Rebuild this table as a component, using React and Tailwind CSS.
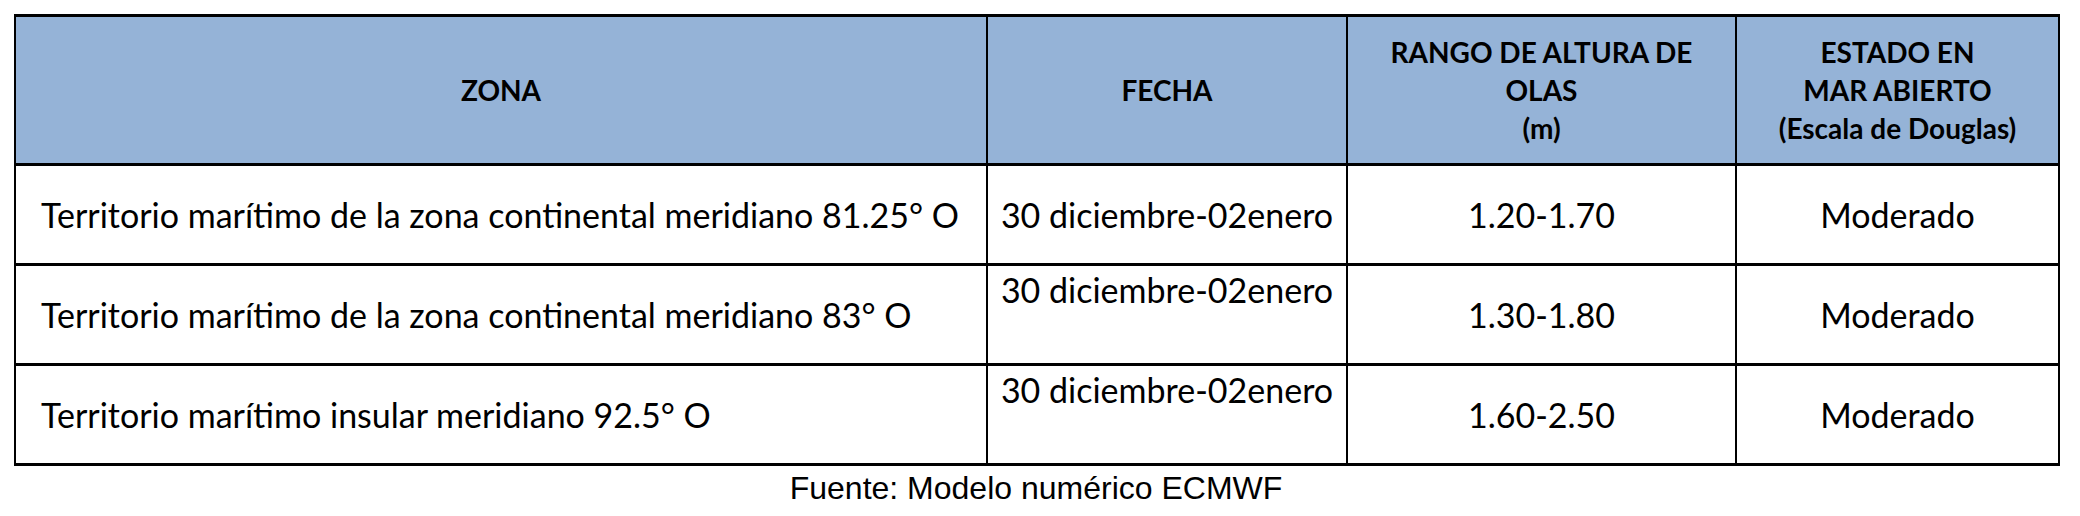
const rows = [
  {
    zona: "Territorio marítimo de la zona continental meridiano 81.25° O",
    fecha: "30 diciembre-02enero",
    fechaTop: false,
    rango: "1.20-1.70",
    estado: "Moderado",
  },
  {
    zona: "Territorio marítimo de la zona continental meridiano 83° O",
    fecha: "30 diciembre-02enero",
    fechaTop: true,
    rango: "1.30-1.80",
    estado: "Moderado",
  },
  {
    zona: "Territorio marítimo insular meridiano 92.5° O",
    fecha: "30 diciembre-02enero",
    fechaTop: true,
    rango: "1.60-2.50",
    estado: "Moderado",
  },
];

export default function App() {
  return (
    <div className="w-[2080px] h-[516px] bg-white pt-[14px] pl-[14px] text-black">
      <table className="w-[2044px] table-fixed border-collapse border-x-2 border-y-[3px] border-black font-[Lato,sans-serif]">
        <colgroup>
          <col className="w-[972px]" />
          <col className="w-[360px]" />
          <col className="w-[389px]" />
          <col className="w-[323px]" />
        </colgroup>
        <thead>
          <tr className="h-[149px] bg-[#95b3d7] text-[28px] leading-[38px] font-bold">
            <th className="border-x-2 border-b-[3px] border-black align-middle text-center">ZONA</th>
            <th className="border-x-2 border-b-[3px] border-black align-middle text-center">FECHA</th>
            <th className="border-x-2 border-b-[3px] border-black align-middle text-center">
              RANGO DE ALTURA DE
              <br />
              OLAS
              <br />
              (m)
            </th>
            <th className="border-x-2 border-b-[3px] border-black align-middle text-center">
              ESTADO EN
              <br />
              MAR ABIERTO
              <br />
              (Escala de Douglas)
            </th>
          </tr>
        </thead>
        <tbody className="text-[34px] leading-[40px]">
          {rows.map((r) => (
            <tr key={r.zona} className="h-[100px]">
              <td className="border-x-2 border-b-[3px] border-black pl-[25px] text-left align-middle">{r.zona}</td>
              {r.fechaTop ? (
                <td className="border-x-2 border-b-[3px] border-black pt-[4px] text-center align-top">{r.fecha}</td>
              ) : (
                <td className="border-x-2 border-b-[3px] border-black text-center align-middle">{r.fecha}</td>
              )}
              <td className="border-x-2 border-b-[3px] border-black text-center align-middle">{r.rango}</td>
              <td className="border-x-2 border-b-[3px] border-black text-center align-middle">{r.estado}</td>
            </tr>
          ))}
        </tbody>
      </table>
      <p className="w-[2044px] text-center font-['Liberation_Sans',Arial,sans-serif] text-[32px] leading-[36px] mt-[4px]">
        Fuente: Modelo numérico ECMWF
      </p>
    </div>
  );
}
